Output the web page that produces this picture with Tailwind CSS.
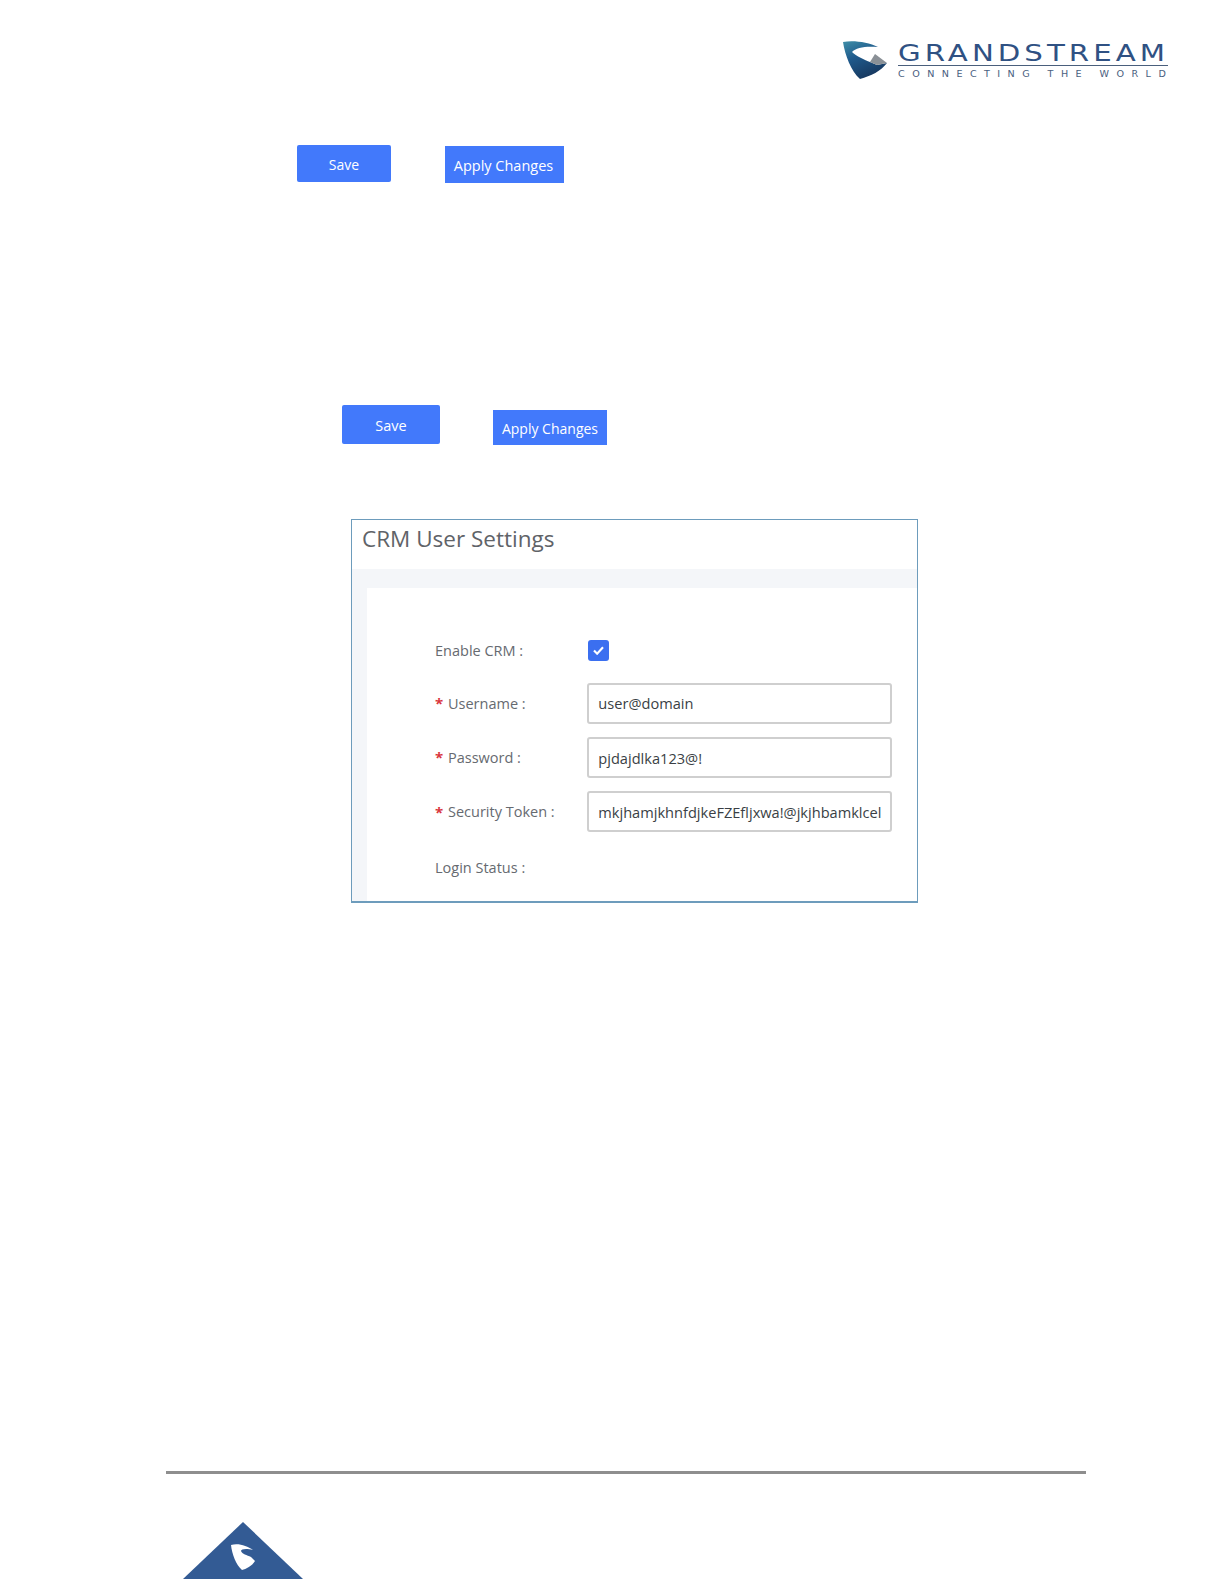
<!DOCTYPE html>
<html lang="en">
<head>
  <meta charset="UTF-8" />
  <title>CRM User Settings</title>
  <script src="https://cdn.jsdelivr.net/npm/@tailwindcss/browser@4"></script>
</head>
<body class="bg-white h-[1584px] overflow-hidden font-['Open_Sans',sans-serif]">
  <!-- Logo -->
  <header class="h-[145px] pt-[41px] pl-[843px] flex items-start gap-[11px]">
    <svg viewBox="0 0 44 40" class="w-[44px] h-[40px] shrink-0">
      <defs>
        <linearGradient id="shield" x1="0" y1="0" x2="0.5" y2="1">
          <stop offset="0" stop-color="#3f8fa8" />
          <stop offset="0.45" stop-color="#1f5a8c" />
          <stop offset="1" stop-color="#17385f" />
        </linearGradient>
      </defs>
      <path fill="url(#shield)" d="M0 1 C 10 -1 25 1 35 6 C 24 5 13 6 9 11 C 13 15 22 19 27 21 L 34 24 L 44 22 C 38 30 28 35 17 38 C 8 30 2 14 0 1 Z" />
      <path fill="#8a9096" d="M27 21 L32 13 L44 22 L34 24 Z" />
    </svg>
    <div class="w-[270px] pt-[2px]">
      <div class="h-[20px] text-[22.5px] leading-[20px] text-[#2f5183] font-['DejaVu_Sans',sans-serif] tracking-[3.1px] whitespace-nowrap origin-left scale-x-[1.3]">GRANDSTREAM</div>
      <div class="mt-[2px] h-[1px] bg-[#4a5f7c]"></div>
      <div class="mt-[4px] text-[8px] leading-[9px] text-[#4a6080] font-['DejaVu_Sans',sans-serif] tracking-[6.2px] whitespace-nowrap origin-left scale-x-[1.2]">CONNECTING THE WORLD</div>
    </div>
  </header>

  <!-- First pair of buttons -->
  <div class="h-[260px] pl-[297px] flex items-start gap-[54px]">
    <button class="w-[94px] h-[37px] pt-[2px] bg-[#4279fb] rounded-[2px] text-white text-[14px]">Save</button>
    <button class="w-[119px] h-[37px] mt-[1px] pt-[2px] pr-[2px] bg-[#4279fb] text-white text-[14.5px]">Apply Changes</button>
  </div>

  <!-- Second pair of buttons -->
  <div class="h-[114px] pl-[342px] flex items-start gap-[53px]">
    <button class="w-[98px] h-[39px] pt-[2px] bg-[#4279fb] rounded-[2px] text-white text-[14.5px]">Save</button>
    <button class="w-[114px] h-[35px] mt-[5px] pt-[2px] bg-[#4279fb] text-white text-[14px]">Apply Changes</button>
  </div>

  <!-- CRM User Settings panel -->
  <section class="ml-[351px] w-[567px] h-[384px] border border-b-2 border-[#6d9cbc] flex flex-col">
    <h1 class="h-[49px] pl-[10px] pt-[1px] text-[22.5px] leading-[36px] text-[#5f6368]">CRM User Settings</h1>
    <div class="flex-1 bg-[#f4f6f9] pl-[15px] pt-[19px]">
      <div class="h-full bg-white pl-[68px] pr-[25px] pt-[52px] text-[14.5px] text-[#666a70]">
        <div class="flex items-center h-[21px]">
          <span class="w-[153px]">Enable CRM :</span>
          <span class="w-[21px] h-[21px] rounded-[3px] bg-[#3b6ff0] flex items-center justify-center">
            <svg viewBox="0 0 12 10" class="w-[11px] h-[9px]"><path d="M1 5 L4.5 8.5 L11 1.5" fill="none" stroke="#fff" stroke-width="2.4" /></svg>
          </span>
        </div>
        <div class="flex items-center h-[41px] mt-[22px]">
          <span class="w-[153px] flex items-center"><span class="w-[13px] text-[#d9363e] text-[15px] font-bold">*</span>Username :</span>
          <div class="w-[306px] h-[41px] border-2 border-[#cfcfcf] rounded-[3px] pl-[9px] flex items-center text-[14.6px] text-[#3a3f45]">user@domain</div>
        </div>
        <div class="flex items-center h-[41px] mt-[13px]">
          <span class="w-[153px] flex items-center"><span class="w-[13px] text-[#d9363e] text-[15px] font-bold">*</span>Password :</span>
          <div class="w-[306px] h-[41px] border-2 border-[#cfcfcf] rounded-[3px] pl-[9px] pt-[2px] flex items-center text-[14.6px] text-[#3a3f45]">pjdajdlka123@!</div>
        </div>
        <div class="flex items-center h-[41px] mt-[13px]">
          <span class="w-[153px] flex items-center pt-[1px]"><span class="w-[13px] text-[#d9363e] text-[15px] font-bold">*</span>Security Token :</span>
          <div class="w-[306px] h-[41px] border-2 border-[#cfcfcf] rounded-[3px] pl-[9px] pt-[2px] flex items-center text-[14.6px] text-[#3a3f45] whitespace-nowrap overflow-hidden">mkjhamjkhnfdjkeFZEfljxwa!@jkjhbamklcel</div>
        </div>
        <div class="flex items-center h-[21px] mt-[25px]">
          <span>Login Status :</span>
        </div>
      </div>
    </div>
  </section>

  <!-- Footer rule and triangle -->
  <footer class="mt-[568px] pl-[166px]">
    <div class="w-[920px] h-[3px] bg-[#8e8e8e]"></div>
    <svg viewBox="0 0 120 57" class="ml-[17px] mt-[48px] w-[120px] h-[57px]">
      <path fill="#335b94" d="M60 0 L120 57 L0 57 Z" />
      <path fill="#fff" d="M48 23 C 56 21 64 24 70 28 C 63 26 58 27 58 29 C 59 32 64 33 68 35 L 72 39 C 69 44 63 47 59 48 C 53 43 49 32 48 23 Z" />
    </svg>
  </footer>
</body>
</html>
